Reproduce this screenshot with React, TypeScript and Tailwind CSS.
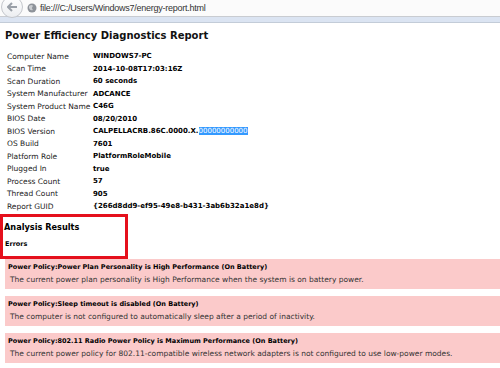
import React from "react";

const rows: [string, string, boolean?][] = [
  ["Computer Name", "WINDOWS7-PC"],
  ["Scan Time", "2014-10-08T17:03:16Z"],
  ["Scan Duration", "60 seconds"],
  ["System Manufacturer", "ADCANCE"],
  ["System Product Name", "C46G"],
  ["BIOS Date", "08/20/2010"],
  ["BIOS Version", "CALPELLACRB.86C.0000.X.", true],
  ["OS Build", "7601"],
  ["Platform Role", "PlatformRoleMobile"],
  ["Plugged In", "true"],
  ["Process Count", "57"],
  ["Thread Count", "905"],
  ["Report GUID", "{266d8dd9-ef95-49e8-b431-3ab6b32a1e8d}"],
];

const errors = [
  ["Power Policy:Power Plan Personality is High Performance (On Battery)", "The current power plan personality is High Performance when the system is on battery power."],
  ["Power Policy:Sleep timeout is disabled (On Battery)", "The computer is not configured to automatically sleep after a period of inactivity."],
  ["Power Policy:802.11 Radio Power Policy is Maximum Performance (On Battery)", "The current power policy for 802.11-compatible wireless network adapters is not configured to use low-power modes."],
];

export default function App() {
  return (
    <div className="w-[500px] h-[368px] overflow-hidden bg-white" style={{ fontFamily: "'DejaVu Sans', Verdana, sans-serif" }}>
      {/* browser bar */}
      <div className="h-[17px] bg-[#fbfbfb] border-b border-[#c9ccd1] flex items-center relative">
        <div className="absolute left-[1px] top-[-4px] w-[22px] h-[22px] rounded-full border border-[#c4c7cc] bg-gradient-to-b from-white to-[#eceef1] flex items-center justify-center">
          <svg width="11" height="10" viewBox="0 0 11 10">
            <path d="M5 1 L1 5 L5 9 M1 5 L10 5" stroke="#9aa0a8" strokeWidth="2" fill="none" />
          </svg>
        </div>
        <div className="ml-[27px] flex items-center gap-[3px]">
          <svg width="10" height="10" viewBox="0 0 10 10">
            <circle cx="5" cy="5" r="4.5" fill="#8d9299" />
            <path d="M2 3 Q5 1 6 3 Q4 5 6 7 Q3 8 2 5Z" fill="#c9ccd0" />
          </svg>
          <span className="text-[9px] tracking-[-0.25px] text-[#333] leading-none" style={{ fontFamily: "'Liberation Sans', Arial, sans-serif" }}>file:///C:/Users/Windows7/energy-report.html</span>
        </div>
      </div>
      <div className="h-[6px] bg-[#dbe4f2] border-b border-[#c3ccd8]" />
      <div className="pl-[5px] pt-[6px] text-[10px] font-bold text-[#111] leading-[14px]">Power Efficiency Diagnostics Report</div>
      <div className="pl-[7px] pt-[7px] text-[7.5px] text-[#222] whitespace-nowrap">
        {rows.map(([k, v, sel]) => (
          <div key={k} className="flex h-[12.5px] items-center">
            <div className="w-[86px]">{k}</div>
            <div className="font-bold text-black text-[7px]">
              {v}
              {sel && <span className="bg-[#3399ff] text-white font-normal">00000000000</span>}
            </div>
          </div>
        ))}
      </div>
      <div className="mt-[1px] w-[128px] h-[45px] border-[3px] border-[#e5101c] pl-[1px] pt-[4px]">
        <div className="text-[8.2px] font-bold text-black leading-[12px]">Analysis Results</div>
        <div className="text-[6.5px] font-bold text-black mt-[7px] pl-[1px]">Errors</div>
      </div>
      <div className="pl-[5px] flex flex-col gap-[7px] whitespace-nowrap">
        {errors.map(([t, d]) => (
          <div key={t} className="bg-[#fbcaca] h-[30px] pl-[3px] pt-[3px] text-[7.5px] text-black">
            <div className="font-bold leading-[11px] text-[6.5px]">{t}</div>
            <div className="pl-[2px] leading-[13px] text-[#333]">{d}</div>
          </div>
        ))}
      </div>
    </div>
  );
}
